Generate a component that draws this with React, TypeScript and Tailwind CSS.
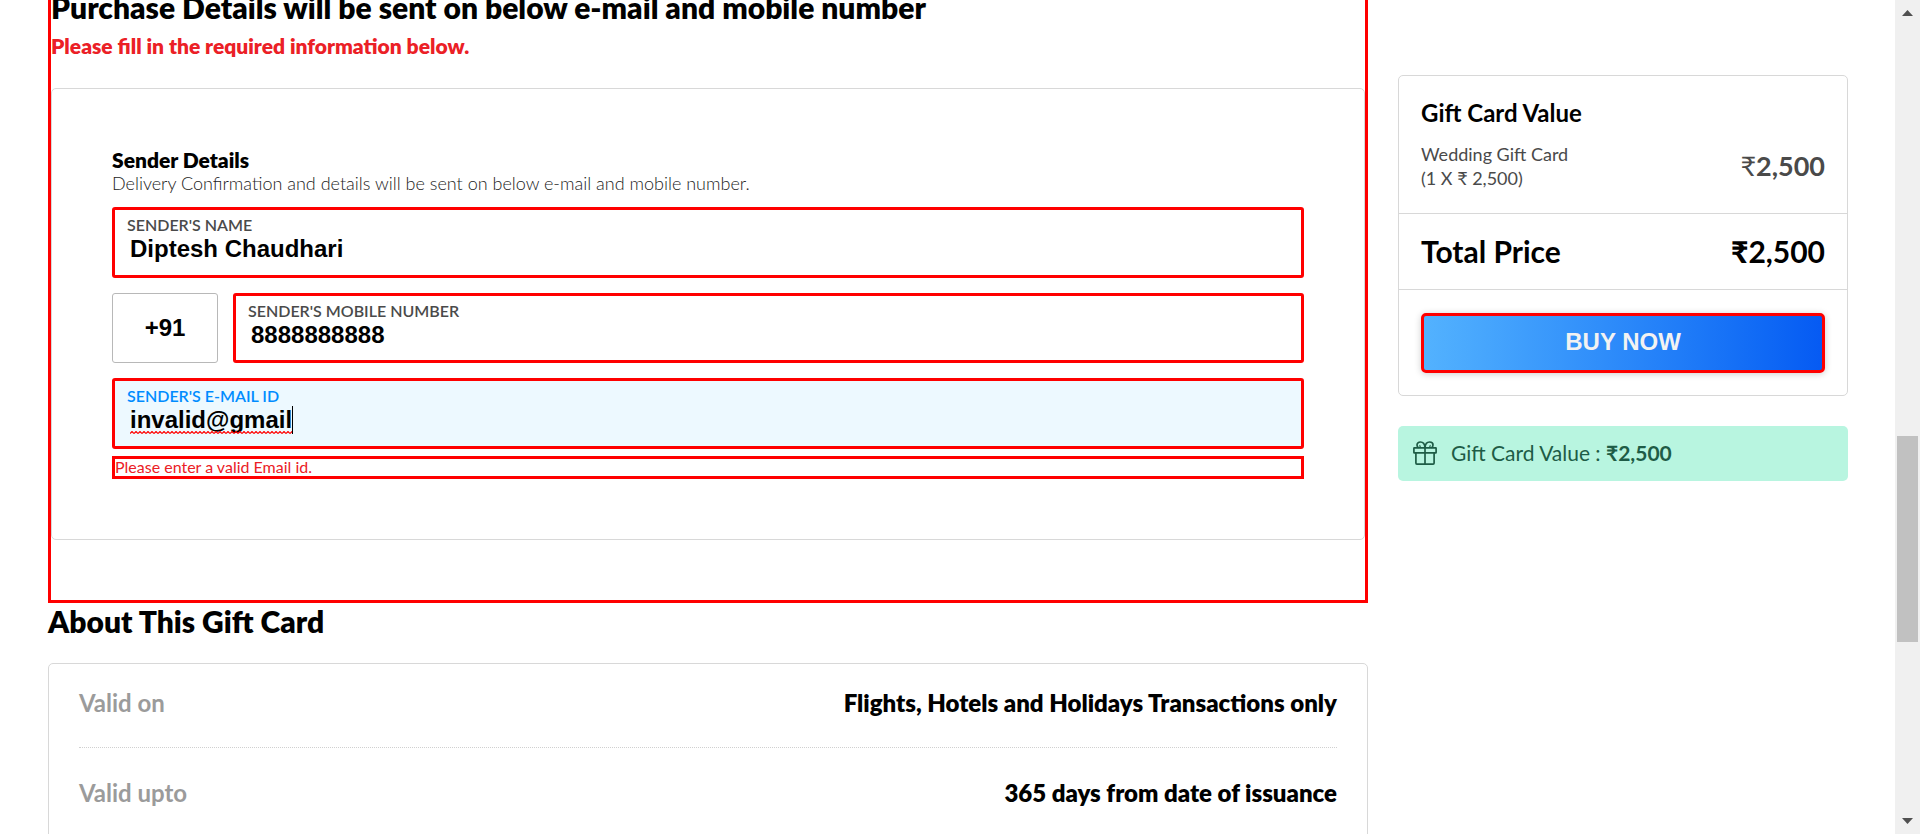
import { useId, useState } from "react";

function GiftIcon() {
  return (
    <svg viewBox="0 0 24 24" className="size-6 shrink-0" fill="none" stroke="currentColor" strokeWidth="1.7" strokeLinejoin="round" aria-hidden="true">
      <rect x="0.9" y="6.9" width="22.2" height="5" rx="0.4" />
      <path d="M2.9 11.9v10.2c0 .6.4 1 1 1h16.2c.6 0 1-.4 1-1V11.9" />
      <path d="M12 6.9v16.2" />
      <path d="M12 6.7C11.8 3.6 10.3 1 7.4 1 5.4 1 4 2.200 4 3.900c0 1.400.7 2.400 1.600 3M12 6.700c.2-3.100 1.700-5.700 4.600-5.700 2 0 3.400 1.200 3.400 2.900 0 1.400-.7 2.400-1.600 3" />
      <path d="M8.200 6.900c-1.200-.9-1.700-2-1.300-2.900M15.800 6.900c1.200-.9 1.700-2 1.300-2.900" strokeWidth="1.1" />
    </svg>
  );
}

type FieldProps = {
  label: string;
  defaultValue: string;
  type?: string;
  active?: boolean;
  className?: string;
};

function Field({ label, defaultValue, type = "text", active = false, className = "" }: FieldProps) {
  const id = useId();
  return (
    <div className={`rounded-[3px] border-3 border-[#ff0000] px-3 pt-[5px] ${active ? "bg-[#edf9ff]" : "bg-white"} ${className}`}>
      <label htmlFor={id} className={`block text-base leading-5 font-semibold ${active ? "text-[#008cff]" : "text-[#4a4a4a]"}`}>
        {label}
      </label>
      <div className="relative">
        <input
          id={id}
          type={type}
          defaultValue={defaultValue}
          className="block h-7 w-full bg-transparent px-[3px] font-['Liberation_Sans',sans-serif] text-2xl leading-7 font-bold text-black outline-none"
        />
        {/* spelling underline and text caret */}
        {active && (
          <span aria-hidden="true" className="pointer-events-none absolute top-0 left-[3px] flex h-7 w-[163px] items-end border-r border-black">
            <svg className="h-[3px] w-full" fill="none">
              <defs>
                <pattern id="wave" width="4" height="3" patternUnits="userSpaceOnUse">
                  <path d="M0 2.500 2 .500 4 2.500" stroke="#ff0000" strokeWidth="1.2" />
                </pattern>
              </defs>
              <rect width="100%" height="3" fill="url(#wave)" />
            </svg>
          </span>
        )}
      </div>
    </div>
  );
}

const details = [
  { term: "Valid on", value: "Flights, Hotels and Holidays Transactions only" },
  { term: "Valid upto", value: "365 days from date of issuance" },
];

function ScrollTrack() {
  return (
    <div aria-hidden="true" className="flex w-[25px] shrink-0 flex-col items-center justify-between bg-[#f0f0f0] text-[#505050]">
      <svg className="mt-2.5 h-1.5 w-[11px]" viewBox="0 0 11 6" fill="currentColor"><path d="M5.500 0 11 6H0z" /></svg>
      <div className="flex w-full grow flex-col items-center">
        <div className="grow-[420]" />
        <div className="w-[21px] grow-[206] bg-[#c1c1c1]" />
        <div className="grow-[176]" />
      </div>
      <svg className="mb-2.5 h-1.5 w-[11px]" viewBox="0 0 11 6" fill="currentColor"><path d="M0 0h11L5.500 6z" /></svg>
    </div>
  );
}

export default function App() {
  const [code, setCode] = useState("+91");
  return (
    <div className="flex h-screen overflow-hidden bg-white font-[Lato,sans-serif] text-black">
      <main className="flex min-w-0 grow items-start gap-[30px] pr-[47px] pl-12">
        <div className="min-w-0 grow">
          <section className="-mt-3.5 border-3 border-[#ff0000] pb-[60px]">
            <h2 className="text-3xl leading-9 font-extrabold">
              Purchase Details will be sent on below e-mail and mobile number
            </h2>
            <p className="mt-[9px] text-[21px] leading-6 font-extrabold text-[#eb2026]">
              Please fill in the required information below.
            </p>
            <form className="mt-[30px] rounded-[5px] border border-[#d8d8d8] px-[60px] pt-[59px] pb-[60px]" onSubmit={(e) => e.preventDefault()}>
              <h3 className="text-[21px] leading-6 font-extrabold">Sender Details</h3>
              <p className="text-lg leading-[22px] font-light text-[#1c1c1c]">
                Delivery Confirmation and details will be sent on below e-mail and mobile number.
              </p>
              <Field label="SENDER'S NAME" defaultValue="Diptesh Chaudhari" className="mt-[13px] h-[71px]" />
              <div className="mt-[15px] flex h-[70px] gap-[15px]">
                <input
                  aria-label="Country code"
                  value={code}
                  onChange={(e) => setCode(e.target.value)}
                  className="w-[106px] rounded-[3px] border border-[#b8b8b8] text-center font-['Liberation_Sans',sans-serif] text-2xl font-bold outline-none"
                />
                <Field label="SENDER'S MOBILE NUMBER" type="tel" defaultValue="8888888888" className="min-w-0 grow" />
              </div>
              <Field label="SENDER'S E-MAIL ID" defaultValue="invalid@gmail" active className="mt-[15px] h-[71px]" />
              <p role="alert" className="mt-[7px] border-3 border-[#ff0000] pb-0.5 text-base leading-[15px] text-[#eb2026]">
                Please enter a valid Email id.
              </p>
            </form>
          </section>

          <section>
            <h2 className="text-3xl leading-9 font-extrabold">About This Gift Card</h2>
            <dl className="mt-6 rounded-[5px] border border-[#d8d8d8] px-[30px]">
              {details.map((d) => (
                <div key={d.term} className="flex justify-between border-b border-dotted border-[#d0d0d0] pt-[30px] pb-[29px] text-2xl leading-[30px] font-bold first:pt-6">
                  <dt className="text-[#9b9b9b]">{d.term}</dt>
                  <dd className="font-extrabold">{d.value}</dd>
                </div>
              ))}
            </dl>
          </section>
        </div>

        <aside className="mt-[75px] w-[450px] shrink-0">
          <div className="rounded-[5px] border border-[#d8d8d8]">
            <div className="border-b border-[#d8d8d8] px-[22px] pt-[22px] pb-[23px]">
              <h3 className="text-2xl leading-[30px] font-bold">Gift Card Value</h3>
              <div className="mt-3.5 flex items-center justify-between text-[#4a4a4a]">
                <p className="text-lg leading-6">
                  Wedding Gift Card
                  <br />
                  (1 X ₹ 2,500)
                </p>
                <p className="text-[27px] leading-8 font-bold"><span className="font-normal">₹</span>2,500</p>
              </div>
            </div>
            <div className="flex justify-between border-b border-[#d8d8d8] px-[22px] pt-[19px] pb-5 text-3xl leading-9 font-bold">
              <p>Total Price</p>
              <p><span className="font-black">₹</span>2,500</p>
            </div>
            <div className="px-[22px] pt-[23px] pb-[22px]">
              <button
                type="button"
                className="block h-[60px] w-full rounded-[5px] border-3 border-[#ff0000] bg-linear-to-r from-[#53b2fe] to-[#065af3] pb-0.5 font-['Liberation_Sans',sans-serif] text-2xl font-bold text-[#f2f2f2] shadow-[0_1px_7px_0_rgba(0,0,0,0.2)]"
              >
                BUY NOW
              </button>
            </div>
          </div>
          <div className="mt-[30px] flex h-[55px] items-center gap-3.5 rounded-[5px] bg-[#b8f5e0] px-[15px] pb-0.5 text-[#1e5c46]">
            <GiftIcon />
            <p className="text-[21px] leading-6">
              Gift Card Value : <span className="font-bold">₹2,500</span>
            </p>
          </div>
        </aside>
      </main>
      <ScrollTrack />
    </div>
  );
}
